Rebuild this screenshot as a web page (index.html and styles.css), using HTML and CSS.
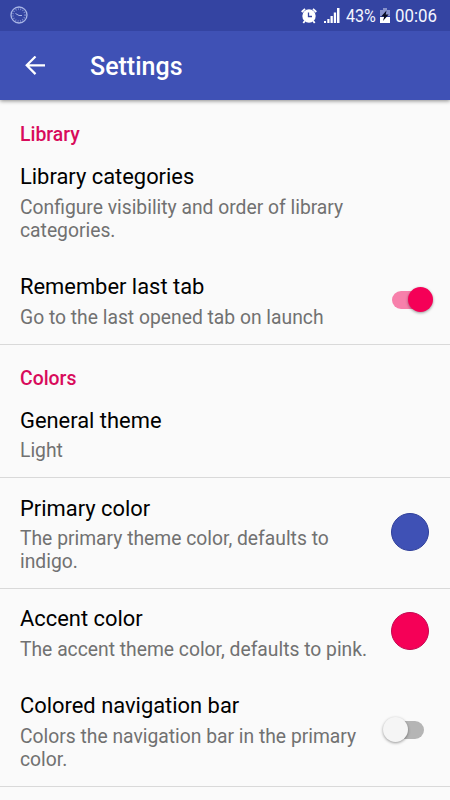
FILE: index.html
```html
<!DOCTYPE html>
<html lang="en">
<head>
<meta charset="utf-8">
<title>Settings</title>
<link rel="stylesheet" href="styles.css">
</head>
<body>
<header class="top">
  <div class="status">
    <svg class="clock" width="20" height="20" viewBox="0 0 20 20" fill="none" stroke="#a9b6e6"><circle cx="10" cy="10" r="8" stroke-width="1.3"/><circle cx="10" cy="10" r="6" stroke-width="1.6" stroke-dasharray="1 1.4" opacity=".6"/><path d="M6.5 8.5 10 10.5h3" stroke-width="1"/></svg>
    <svg class="alarm" width="16" height="16" viewBox="0 0 16 16"><circle cx="8" cy="8" r="6.7" fill="#fff"/><path d="M.7 4 4 .9M15.3 4 12 .9M3.8 13 2.3 15M12.2 13l1.5 2" stroke="#fff" stroke-width="1.8"/><path d="M7.5 4.5V8.5h3.5" fill="none" stroke="#3443a0" stroke-width="1.3"/></svg>
    <svg class="signal" width="16" height="15" viewBox="0 0 16 15" fill="#fff"><path d="M0 13h2v2H0zM3.3 11h2.2v4H3.3zM6.5 8h2.3v7H6.5zM9.8 4.5h2.3V15H9.8zM13 0h2.5v15H13z"/></svg>
    <span class="percent">43%</span>
    <svg class="battery" width="10" height="15" viewBox="0 0 10 15"><path d="M3 0h4v2h3v6H0V2h3z" fill="#8791cb"/><path d="M0 9h10v6H0z" fill="#fff"/><path d="M6.5 2.5 1.2 8.4h3L3 13l5.6-6.4H5.7z" fill="#080b20"/></svg>
    <span class="time">00:06</span>
  </div>
  <div class="appbar">
    <svg class="back" width="20" height="20" viewBox="0 0 20 20" fill="none" stroke="#fff" stroke-width="2.2"><path d="M20 9.3H2M10.5.5 1.7 9.3l8.8 8.8"/></svg>
    <h1>Settings</h1>
  </div>
</header>
<main>
  <section>
    <h2 class="first">Library</h2>
    <div class="row"><div class="text"><h3>Library categories</h3><p>Configure visibility and order of library<br>categories.</p></div></div>
    <div class="row"><div class="text"><h3>Remember last tab</h3><p>Go to the last opened tab on launch</p></div><div class="switch on"><i></i></div></div>
  </section>
  <section>
    <h2>Colors</h2>
    <div class="row line"><div class="text"><h3>General theme</h3><p>Light</p></div></div>
    <div class="row line"><div class="text"><h3>Primary color</h3><p>The primary theme color, defaults to<br>indigo.</p></div><div class="dot indigo"></div></div>
    <div class="row"><div class="text"><h3>Accent color</h3><p>The accent theme color, defaults to pink.</p></div><div class="dot pink"></div></div>
    <div class="row"><div class="text"><h3>Colored navigation bar</h3><p>Colors the navigation bar in the primary<br>color.</p></div><div class="switch off"><i></i></div></div>
  </section>
</main>
</body>
</html>
```
FILE: styles.css
```css
* { box-sizing: border-box; margin: 0; padding: 0; }
body { width: 450px; height: 800px; overflow: hidden; background: #fafafa; font-family: Roboto, "Liberation Sans", sans-serif; }
.top { position: relative; height: 100px; background: #3f51b5; box-shadow: 0 1px 4px rgba(0,0,0,.45); }
.status { height: 31px; display: flex; align-items: center; background: #3444a2; color: #f4f6ff; padding: 0 13px 0 9px; font-size: 18.5px; }
.clock { margin-top: -2px; }
.alarm { margin-left: auto; margin-right: 7px; }
.percent { margin-left: 6px; width: 30px; }
.battery { margin-left: 4px; }
.time { margin-left: 5px; width: 42px; }
.percent, .time { white-space: nowrap; transform: scaleX(.91); transform-origin: 0 50%; }
.percent { transform: scaleX(.87); }
.appbar { height: 69px; display: flex; align-items: center; padding-left: 25px; }
.back { display: block; }
h1 { margin-left: 45px; padding-top: 2px; color: #fff; font-size: 25px; line-height: 30px; font-weight: 500; }
section { border-bottom: 1px solid #d9d9d9; }
h2 { height: 45px; padding: 21px 20px 0; font-size: 19.4px; line-height: 26px; font-weight: 500; color: #d80b5b; }
h2.first { height: 47px; padding-top: 22px; }
.row { display: flex; align-items: center; justify-content: space-between; padding: 17px 16px 16px 20px; }
.line { border-bottom: 1px solid #d9d9d9; }
.text { white-space: nowrap; }
h3 { height: 26px; margin-bottom: 5px; font-size: 21.9px; line-height: 26px; font-weight: 400; color: #000; }
p { font-size: 19.3px; line-height: 23px; color: #717171; padding-top: 1px; margin-bottom: -1px; }
.line h3 { padding-top: 1px; }
.dot { width: 38px; height: 38px; margin: -3px 5px 0 0; border-radius: 50%; }
.indigo { background: #3f51b5; border: 1px solid #2f3f9a; }
.pink { margin-top: -4px; background: #f50057; border: 1px solid #c40650; }
.switch { position: relative; width: 32px; height: 18px; margin: -3px 10px 0 0; border-radius: 9px; background: #b5b5b5; }
.switch i { position: absolute; top: -4px; width: 25px; height: 25px; border-radius: 50%; background: #f5f5f5; box-shadow: 0 1px 3px rgba(0,0,0,.4); }
.off { width: 36px; }
.off i { left: -5px; }
.on { margin-right: 8px; width: 34px; background: #f780ab; }
.on i { left: 16px; background: #f50057; }
```
